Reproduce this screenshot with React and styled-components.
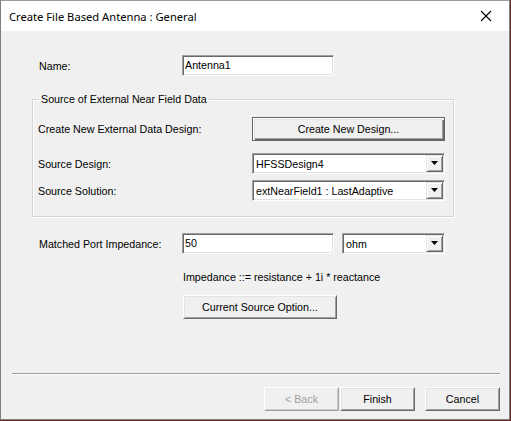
import React from 'react'
import styled, { createGlobalStyle, css } from 'styled-components'

const GlobalStyle = createGlobalStyle`
  html, body {
    margin: 0;
    padding: 0;
    background: #6d2b2b;
  }
  body {
    font-family: "Liberation Sans", Arial, sans-serif;
    font-size: 10.7px;
    color: #000;
  }
`

const App = () => {
  return (
    <>
      <GlobalStyle />
      <Window>
        <TitleBar>
          <Title>Create File Based Antenna : General</Title>
          <CloseButton>
            <svg width="12" height="12" viewBox="0 0 12 12">
              <path d="M1 1 L11 11 M11 1 L1 11" stroke="#000" strokeWidth="1.1" />
            </svg>
          </CloseButton>
        </TitleBar>

        <Body>
          <NameRow>
            <Label>Name:</Label>
            <TextInput defaultValue="Antenna1" />
          </NameRow>

          <Group>
            <Legend>Source of External Near Field Data</Legend>
            <FieldRow $height={24}>
              <Label>Create New External Data Design:</Label>
              <Button $primary $height={24}>Create New Design...</Button>
            </FieldRow>

            <FieldRow $height={21} $gap={12}>
              <Label>Source Design:</Label>
              <Select value="HFSSDesign4" />
            </FieldRow>

            <FieldRow $height={21} $gap={6}>
              <Label>Source Solution:</Label>
              <Select value="extNearField1 : LastAdaptive" />
            </FieldRow>
          </Group>

          <ImpedanceRow>
            <Label>Matched Port Impedance:</Label>
            <TextInput defaultValue="50" />
            <UnitSelect value="ohm" />
          </ImpedanceRow>

          <Hint>Impedance ::= resistance + 1i * reactance</Hint>

          <OptionButton $height={24}>Current Source Option...</OptionButton>

          <Footer>
            <Separator />
            <ButtonRow>
              <Button $width={75} $height={24} disabled>&lt; Back</Button>
              <Button $width={75} $height={24}>Finish</Button>
              <CancelButton $width={75} $height={24}>Cancel</CancelButton>
            </ButtonRow>
          </Footer>
        </Body>
      </Window>
    </>
  )
}

const Select = ({ value, className }) => (
  <SelectBox className={className}>
    <SelectValue>{value}</SelectValue>
    <ArrowButton>
      <svg width="7" height="4" viewBox="0 0 7 4">
        <path d="M0 0 H7 L3.5 4 Z" fill="#000" />
      </svg>
    </ArrowButton>
  </SelectBox>
)

const Window = styled.div`
  width: 510px;
  height: 420px;
  box-sizing: border-box;
  border: 1px solid #7d7d7d;
  border-top-color: #9a9a9a;
  background: #f0f0f0;
  display: flex;
  flex-direction: column;
`

const TitleBar = styled.div`
  height: 30px;
  flex: none;
  background: #fff;
  display: flex;
  align-items: center;
  padding-left: 8px;
`

const Title = styled.div`
  font-family: "Noto Sans", "Liberation Sans", sans-serif;
  font-size: 11.2px;
  color: #000;
`

const CloseButton = styled.div`
  margin-left: auto;
  width: 46px;
  height: 30px;
  display: flex;
  align-items: center;
  justify-content: center;
`

const Body = styled.div`
  flex: 1;
  display: flex;
  flex-direction: column;
  padding-left: 31px;
`

const Label = styled.div`
  white-space: nowrap;
`

const sunken = css`
  box-sizing: border-box;
  background: #fff;
  border-style: solid;
  border-width: 1px;
  border-color: #a0a0a0 #fff #fff #a0a0a0;
  box-shadow: inset 1px 1px 0 #696969, inset -1px -1px 0 #e3e3e3;
`

const TextInput = styled.input`
  ${sunken}
  width: 152px;
  height: 21px;
  margin: 0;
  padding: 0 2px 1px;
  font-family: "Liberation Sans", Arial, sans-serif;
  font-size: 10.7px;
  color: #000;
  outline: none;
`

const NameRow = styled.div`
  margin-top: 24px;
  padding-left: 7px;
  display: grid;
  grid-template-columns: 143px 152px;
  align-items: center;
`

const Group = styled.fieldset`
  margin: 17px 0 0 0;
  width: 422px;
  box-sizing: border-box;
  border: 1px solid #d5d5d5;
  box-shadow: inset 1px 1px 0 #fff, 1px 1px 0 #fff;
  padding: 12px 7px 15px 5px;
`

const Legend = styled.legend`
  padding: 0 2px;
  margin-left: 1px;
  line-height: 12px;
`

const FieldRow = styled.div`
  display: grid;
  grid-template-columns: 214px 193px;
  height: ${p => p.$height}px;
  margin-top: ${p => p.$gap || 0}px;
  align-items: center;
`

const SelectBox = styled.div`
  ${sunken}
  width: 193px;
  height: 21px;
  display: flex;
  align-items: stretch;
  padding: 1px;
`

const SelectValue = styled.div`
  flex: 1;
  padding-left: 2px;
  display: flex;
  align-items: center;
  white-space: nowrap;
  overflow: hidden;
`

const ArrowButton = styled.div`
  width: 17px;
  box-sizing: border-box;
  background: #f0f0f0;
  border-style: solid;
  border-width: 1px;
  border-color: #e3e3e3 #696969 #696969 #e3e3e3;
  box-shadow: inset 1px 1px 0 #fff, inset -1px -1px 0 #a0a0a0;
  display: flex;
  align-items: center;
  justify-content: center;
  padding-bottom: 1px;
`

const UnitSelect = styled(Select)`
  width: 103px;
  margin-left: 8px;
`

const ImpedanceRow = styled.div`
  margin-top: 16px;
  padding-left: 7px;
  display: flex;
  align-items: center;

  & > ${Label} {
    width: 143px;
  }
`

const Hint = styled.div`
  margin-top: 17px;
  padding-left: 151px;
  line-height: 13px;
`

const Button = styled.button`
  width: ${p => (p.$width ? `${p.$width}px` : '100%')};
  height: ${p => p.$height}px;
  box-sizing: border-box;
  margin: 0;
  padding: 0 0 1px;
  font-family: "Liberation Sans", Arial, sans-serif;
  font-size: 10.7px;
  color: #000;
  background: #f0f0f0;
  border-style: solid;
  border-width: 1px;
  border-color: #fff #696969 #696969 #fff;
  box-shadow: inset 1px 1px 0 #e3e3e3, inset -1px -1px 0 #a0a0a0;
  outline: none;

  &:disabled {
    color: #a0a0a0;
    border-color: #fff #a0a0a0 #a0a0a0 #fff;
    box-shadow: inset 1px 1px 0 #f0f0f0, inset -1px -1px 0 #c8c8c8;
  }

  ${p => p.$primary && css`
    border-color: #646464;
    box-shadow: inset 1px 1px 0 #fff, inset 2px 2px 0 #e3e3e3, inset -1px -1px 0 #696969, inset -2px -2px 0 #a0a0a0;
  `}
`

const OptionButton = styled(Button)`
  width: 154px;
  margin-top: 11px;
  margin-left: 151px;
`

const Footer = styled.div`
  margin-top: auto;
  margin-left: -20px;
  padding-right: 9px;
  padding-bottom: 8px;
  display: flex;
  flex-direction: column;
`

const Separator = styled.div`
  height: 1px;
  background: #a0a0a0;
  border-bottom: 1px solid #fff;
`

const ButtonRow = styled.div`
  margin-top: 12px;
  display: flex;
  justify-content: flex-end;
  gap: 1px;
`

const CancelButton = styled(Button)`
  margin-left: 9px;
`

export default App
